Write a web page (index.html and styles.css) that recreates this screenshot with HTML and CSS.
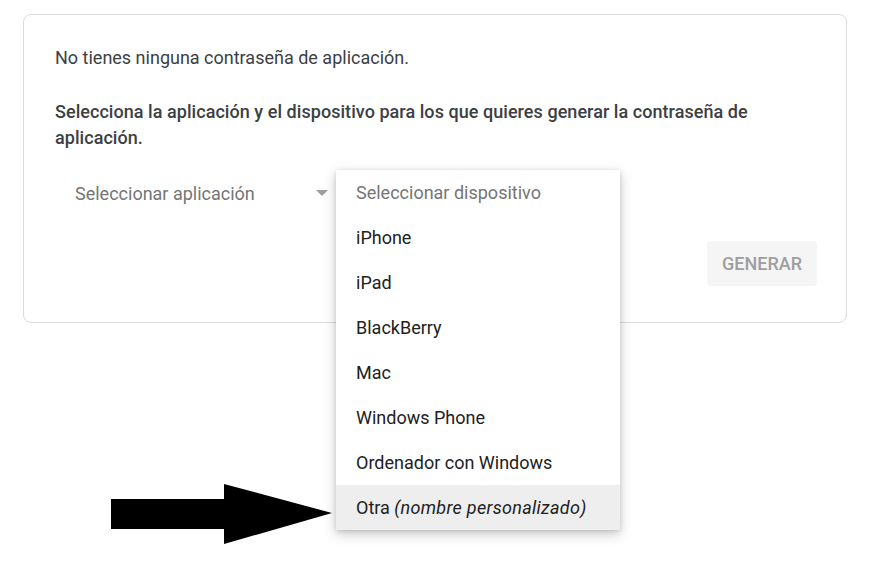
FILE: index.html
```html
<!DOCTYPE html>
<html lang="es">
<head>
<meta charset="utf-8">
<title>Contraseñas de aplicación</title>
<link rel="stylesheet" href="styles.css">
</head>
<body>
<div class="page">
  <div class="card">
    <p class="intro">No tienes ninguna contraseña de aplicación.</p>
    <p class="lead">Selecciona la aplicación y el dispositivo para los que quieres generar la contraseña de aplicación.</p>
    <div class="selects">
      <div class="select select-app">
        <span class="select-label">Seleccionar aplicación</span>
        <span class="caret"></span>
      </div>
      <div class="select select-device">
        <span class="select-label">Seleccionar dispositivo</span>
        <ul class="menu">
          <li class="menu-item placeholder">Seleccionar dispositivo</li>
          <li class="menu-item">iPhone</li>
          <li class="menu-item">iPad</li>
          <li class="menu-item">BlackBerry</li>
          <li class="menu-item">Mac</li>
          <li class="menu-item">Windows Phone</li>
          <li class="menu-item">Ordenador con Windows</li>
          <li class="menu-item active">Otra <em>(nombre personalizado)</em></li>
        </ul>
      </div>
    </div>
    <div class="actions">
      <button class="btn-generate" type="button">Generar</button>
    </div>
  </div>
  <svg class="pointer" width="222" height="60" viewBox="0 0 222 60" aria-hidden="true">
    <polygon points="0,15 113,15 113,0 221,29 113,60 113,45 0,45" fill="#000"/>
  </svg>
</div>
</body>
</html>
```

FILE: styles.css
```css
* { box-sizing: border-box; }
html, body { margin: 0; background: #fff; }
body {
  font-family: Roboto, "Noto Sans", "Liberation Sans", sans-serif;
  font-size: 18px;
  color: #3c4043;
}
.page {
  position: relative;
  width: 871px;
  height: 563px;
  padding: 14px 0 0 23px;
}
.card {
  width: 824px;
  border: 1px solid #dadce0;
  border-radius: 8px;
  padding: 31px 29px 36px 31px;
}
.intro {
  margin: 0;
  line-height: 24px;
  color: #3c4043;
}
.lead {
  margin: 29px 0 0;
  line-height: 26px;
  font-weight: 500;
  color: #3c4043;
  letter-spacing: 0.05px;
}
.selects {
  display: flex;
  margin-top: 19px;
  height: 46px;
}
.select {
  display: flex;
  align-items: center;
  height: 46px;
  padding-left: 20px;
}
.select-label { color: #757575; }
.select-app {
  width: 281px;
  justify-content: space-between;
  padding-right: 8px;
}
.caret {
  width: 0;
  height: 0;
  border-left: 6px solid transparent;
  border-right: 6px solid transparent;
  border-top: 6px solid #9e9e9e;
  margin-top: -1px;
}
.select-device {
  position: relative;
  width: 284px;
}
.menu {
  position: absolute;
  top: 0;
  left: 0;
  width: 284px;
  margin: 0;
  padding: 0;
  list-style: none;
  background: #fff;
  box-shadow: 0 4px 12px rgba(0,0,0,0.22), 0 1px 4px rgba(0,0,0,0.12);
  z-index: 2;
}
.menu-item {
  height: 45px;
  line-height: 45px;
  padding-left: 20px;
  color: #212121;
  white-space: nowrap;
}
.menu-item.placeholder { color: #757575; }
.menu-item.active { background: #eeeeee; }
.menu-item em { font-style: italic; letter-spacing: 0.3px; }
.actions {
  display: flex;
  justify-content: flex-end;
  margin-top: 25px;
}
.btn-generate {
  width: 110px;
  height: 45px;
  border: none;
  border-radius: 4px;
  background: #f5f5f5;
  color: #9e9e9e;
  font-family: inherit;
  font-size: 18px;
  font-weight: 500;
  text-transform: uppercase;
  padding: 0;
}
.pointer {
  position: absolute;
  left: 111px;
  top: 484px;
}
```
